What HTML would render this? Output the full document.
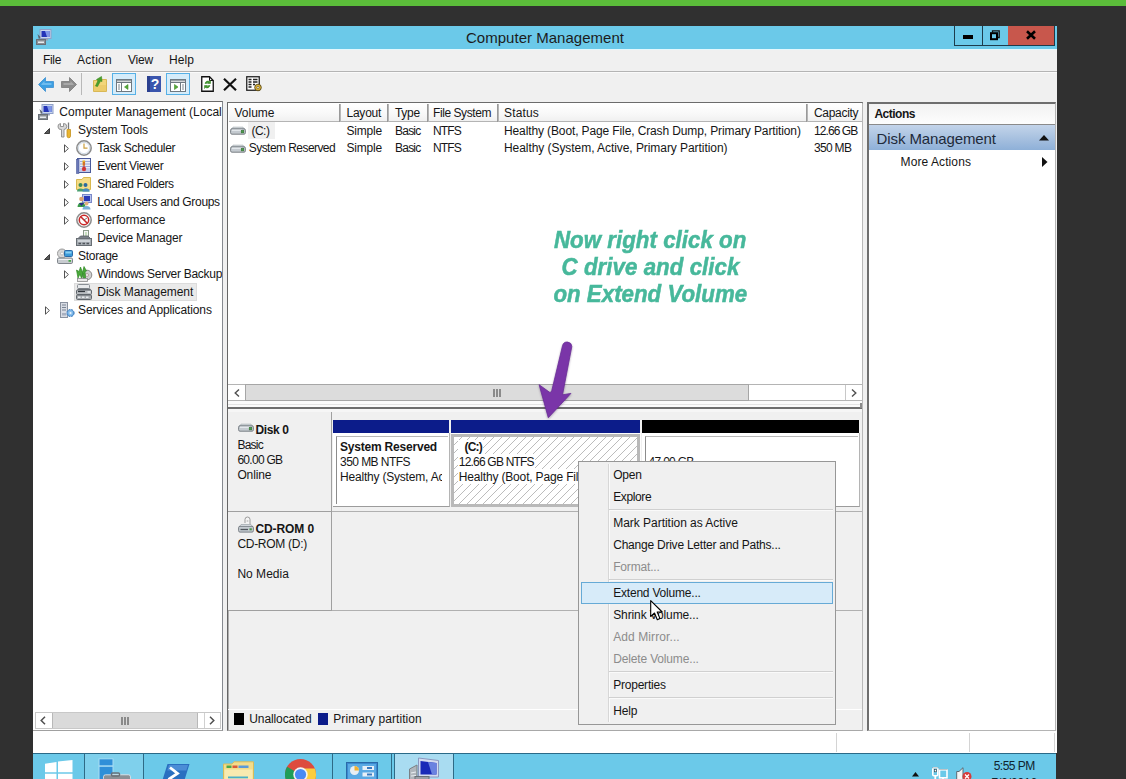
<!DOCTYPE html>
<html>
<head>
<meta charset="utf-8">
<title>Computer Management</title>
<style>
html,body{margin:0;padding:0;}
body{width:1126px;height:779px;overflow:hidden;background:#303030;position:relative;font-family:"Liberation Sans",sans-serif;font-size:12px;color:#000;}
.a{position:absolute;}
.t{position:absolute;white-space:nowrap;line-height:14px;height:14px;color:#161616;}
svg{position:absolute;overflow:visible;}
#green{left:0;top:0;width:1126px;height:6px;background:#5bbd3a;overflow:hidden;}
#win{left:33px;top:26px;width:1024px;height:727px;background:#f0f0f0;}
#title{left:33px;top:26px;width:1024px;height:23px;background:#6bc9e9;border-bottom:1px solid #e4f8fd;}
#menuline{left:33px;top:71px;width:1024px;height:1px;background:#b4b4b4;}
.sel{position:absolute;border:1px solid #56b0e6;background:#d5ecfa;box-sizing:border-box;}
.tri{position:absolute;width:0;height:0;}
</style>
</head>
<body>
<div id="green" class="a"></div>
<div id="win" class="a"></div>
<div id="title" class="a"></div>
<svg style="left:36px;top:29px" width="16" height="16" viewBox="0 0 16 16">
 <rect x="4" y="0.5" width="11" height="9" fill="#c9d6ee" stroke="#8fa0c8" stroke-width="1"/>
 <rect x="5.5" y="2" width="8" height="6" fill="#2434b8"/>
 <path d="M9 2h4.5v6H11z" fill="#7f97e8"/>
 <rect x="7" y="10" width="5" height="1.5" fill="#9aa3b5"/>
 <rect x="0.5" y="10.5" width="9" height="5" fill="#8a9096" stroke="#6a7078"/>
 <rect x="2" y="12.5" width="6" height="1.5" fill="#e8ecf0"/>
 <path d="M1.5 5l3 3-1.5 2.5z" fill="#5a6470"/>
</svg>
<div class="t" style="left:466px;top:27.5px;font-size:15px;line-height:19px;height:19px;color:#1c1c1c;letter-spacing:0.021px;">Computer Management</div>
<div class="a" style="left:954px;top:26px;width:101px;height:20px;box-sizing:border-box;border:1px solid #1d3c4c;border-top:none;"></div>
<div class="a" style="left:982px;top:26px;width:1px;height:19px;background:#1d3c4c;"></div>
<div class="a" style="left:1008px;top:26px;width:46px;height:19px;background:#c8574c;"></div>
<div class="a" style="left:963px;top:35px;width:10px;height:4px;background:#000;"></div>
<svg style="left:990px;top:30px" width="10" height="10" viewBox="0 0 10 10"><path d="M2.5 2.5V0.8H9.2V7.5H7.5" fill="none" stroke="#111" stroke-width="1.3"/><rect x="1" y="3.2" width="6" height="6" fill="none" stroke="#000" stroke-width="2"/></svg>
<svg style="left:1026px;top:31px" width="10" height="8" viewBox="0 0 10 8"><path d="M1 0.3L9 7.7M9 0.3L1 7.7" stroke="#000" stroke-width="2.6" fill="none"/></svg>
<div id="menuline" class="a"></div><div class="a" style="left:33px;top:72px;width:1024px;height:1px;background:#fafafa;"></div>
<div class="t" style="left:43px;top:53px;letter-spacing:-0.336px;">File</div><div class="t" style="left:77px;top:53px;letter-spacing:0.273px;">Action</div><div class="t" style="left:128px;top:53px;letter-spacing:-0.199px;">View</div><div class="t" style="left:169px;top:53px;letter-spacing:0.078px;">Help</div>
<svg style="left:38px;top:77px" width="16" height="15" viewBox="0 0 16 15"><path d="M0.5 7.5L7.5 0.5V4.5H15.5V10.5H7.5V14.5Z" fill="#3d9fe2" stroke="#3b8fd0" stroke-width="0.8"/><path d="M3 7.5L6.5 4V6H13.5V8H4Z" fill="#7cc3f2" opacity="0.8"/></svg>
<svg style="left:61px;top:77px" width="16" height="15" viewBox="0 0 16 15"><path d="M15.5 7.5L8.5 0.5V4.5H0.5V10.5H8.5V14.5Z" fill="#8c8c8c" stroke="#7a7a7a" stroke-width="0.8"/><path d="M13 7.5L9.5 4V6H2.500V8H12Z" fill="#b0b0b0" opacity="0.8"/></svg>
<div class="a" style="left:81px;top:73px;width:1px;height:22px;background:#b8b8b8;"></div>
<svg style="left:93px;top:76px" width="15" height="16" viewBox="0 0 15 16"><path d="M0.5 4.5H5L6 3.500H13.500V15.500H0.500Z" fill="#f3d67a" stroke="#d9b856"/><rect x="1" y="9" width="12" height="6" fill="#e9c765" opacity="0.7"/><path d="M2.500 10L5 4.500L3.500 3.500L8.500 0.500L9 5.500L7.500 5L4.500 10.500Z" fill="#4aa02c" stroke="#3a8a20" stroke-width="0.6"/></svg>
<div class="sel" style="left:112px;top:73px;width:24px;height:22px;"></div>
<svg style="left:116px;top:79px" width="16" height="13" viewBox="0 0 16 13"><rect x="0.5" y="0.5" width="15" height="12" fill="#fff" stroke="#6e7880"/><path d="M0.500 3.500H15.500M5.500 3.500V12.500M0.500 1.800H15" stroke="#6e7880" fill="none"/><path d="M2 6H4M2 8H4M2 10H4" stroke="#6e7880" stroke-width="0.9"/><path d="M12 5.500V10.500L8.500 8Z" fill="#57a83a" stroke="#3f8f28" stroke-width="0.6"/></svg>
<svg style="left:147px;top:76px" width="14" height="16" viewBox="0 0 14 16"><rect x="0" y="0" width="14" height="16" fill="#3a55ad"/><rect x="0" y="0" width="3" height="16" fill="#2a3f8f"/><text x="8" y="13" font-family="Liberation Sans, sans-serif" font-size="14" font-weight="bold" fill="#fff" text-anchor="middle">?</text></svg>
<div class="sel" style="left:166px;top:73px;width:24px;height:22px;"></div>
<svg style="left:170px;top:79px" width="16" height="13" viewBox="0 0 16 13"><rect x="0.500" y="0.500" width="15" height="12" fill="#fff" stroke="#6e7880"/><path d="M0.500 3.500H15.500M10.500 3.500V12.500M0.500 1.800H15" stroke="#6e7880" fill="none"/><path d="M12 6H14M12 8H14M12 10H14" stroke="#6e7880" stroke-width="0.9"/><path d="M4.500 5.500V10.500L8 8Z" fill="#57a83a" stroke="#3f8f28" stroke-width="0.6"/></svg>
<svg style="left:201px;top:76px" width="13" height="16" viewBox="0 0 13 16"><path d="M0.750 0.750H8.500L12.250 4.500V15.250H0.750Z" fill="#fff" stroke="#111" stroke-width="1.3"/><path d="M8.500 0.750V4.500H12.250" fill="none" stroke="#111" stroke-width="1"/><path d="M4 7.500A3 3 0 0 1 8.500 5.500L9.500 4.500V7.500H6.500L7.500 6.500A1.800 1.800 0 0 0 5.500 7.500ZM9 9.500A3 3 0 0 1 4.500 11.500L3.500 12.500V9.500H6.500L5.500 10.500A1.800 1.800 0 0 0 7.500 9.500Z" fill="#3f9a2a" stroke="#2c7a1c" stroke-width="0.5"/></svg>
<svg style="left:223px;top:78px" width="14" height="13" viewBox="0 0 14 13"><path d="M1 0.700L13 12.300M13 0.700L1 12.300" stroke="#111" stroke-width="2.200" fill="none"/></svg>
<svg style="left:246px;top:76px" width="17" height="16" viewBox="0 0 17 16"><rect x="0.750" y="0.750" width="12.500" height="13.500" fill="#fff" stroke="#222" stroke-width="1.3"/><path d="M2.500 3.500H5.500M7 3.500H11.500M2.500 6H5.500M7 6H11.500M2.500 8.500H5.500M7 8.500H9M2.500 11H5.500" stroke="#222" stroke-width="1.400"/><circle cx="12" cy="11.500" r="3.300" fill="#d9b23a" stroke="#5a4a1a" stroke-width="0.9"/><circle cx="12" cy="11.500" r="1.100" fill="#fff" stroke="#5a4a1a" stroke-width="0.6"/></svg>
<div class="a" style="left:33px;top:101px;width:190px;height:630px;background:#fff;border-top:1px solid #6a6a6a;border-right:1px solid #868a90;border-bottom:1px solid #a0a0a0;box-sizing:border-box;"></div>
<div class="a" style="left:74px;top:283px;width:123px;height:18px;background:#eaeaea;border:1px solid #dcdcdc;box-sizing:border-box;"></div>
<svg style="left:38px;top:104px" width="16" height="16" viewBox="0 0 16 16"><rect x="4" y="0.5" width="11" height="9" fill="#c9d6ee" stroke="#8fa0c8"/><rect x="5.5" y="2" width="8" height="6" fill="#2434b8"/><path d="M9 2h4.500v6H11z" fill="#7f97e8"/><rect x="7" y="10" width="5" height="1.500" fill="#9aa3b5"/><rect x="0.500" y="10.500" width="9" height="5" fill="#8a9096" stroke="#6a7078"/><rect x="2" y="12.500" width="6" height="1.500" fill="#e8ecf0"/><path d="M1.500 5l3 3-1.500 2.500z" fill="#5a6470"/></svg>
<div class="t" style="left:59.3px;top:105px;letter-spacing:0.016px;">Computer Management (Local</div>
<svg style="left:44px;top:128px" width="6" height="6" viewBox="0 0 6 6"><path d="M5.500 0.500V5.500H0.500Z" fill="#5a5a5a" stroke="#303030" stroke-width="0.900"/></svg>
<svg style="left:59px;top:122px" width="16" height="16" viewBox="0 0 16 16"><path d="M2.500 15V7.500A3 3 0 0 1 1.500 1.500V4.500H4.500V1.500A3 3 0 0 1 5 7.500V15Z" fill="#d8d8d8" stroke="#8a8a8a" stroke-width="0.9"/><path d="M9.500 0.500V7" stroke="#7a7a7a" stroke-width="1.300"/><path d="M8 7.500H11.500V14A1.750 1.750 0 0 1 8 14Z" fill="#eab530" stroke="#c4901c" stroke-width="0.8"/></svg>
<div class="t" style="left:78px;top:123px;letter-spacing:-0.095px;">System Tools</div>
<svg style="left:64px;top:143.5px" width="5" height="9" viewBox="0 0 5 9"><path d="M0.500 0.800L4.400 4.500L0.500 8.200Z" fill="#fff" stroke="#404040" stroke-width="0.900"/></svg>
<svg style="left:76px;top:140px" width="16" height="16" viewBox="0 0 16 16"><circle cx="8" cy="8" r="7.200" fill="#eef2f6" stroke="#8c8c8c" stroke-width="1.500"/><circle cx="8" cy="8" r="5.600" fill="#fff" stroke="#c8d4e0" stroke-width="0.800"/><path d="M8 3.500V8.200H11.500" fill="none" stroke="#caa040" stroke-width="1.200"/></svg>
<div class="t" style="left:97.3px;top:141px;letter-spacing:-0.289px;">Task Scheduler</div>
<svg style="left:64px;top:161.5px" width="5" height="9" viewBox="0 0 5 9"><path d="M0.500 0.800L4.400 4.500L0.500 8.200Z" fill="#fff" stroke="#404040" stroke-width="0.900"/></svg>
<svg style="left:76px;top:158px" width="16" height="16" viewBox="0 0 16 16"><rect x="1.500" y="0.500" width="13" height="14" fill="#e8ecf8" stroke="#4a5a9a"/><rect x="0.500" y="1.500" width="2.500" height="14" fill="#6a78b8" stroke="#4a5a9a" stroke-width="0.600"/><path d="M4 3.500H14M4 6H14M4 8.500H14M4 11H14M4 13H14" stroke="#8a98d0" stroke-width="0.800"/><rect x="6.500" y="2.500" width="2.600" height="5" fill="#e8b020"/><circle cx="8" cy="11" r="2.200" fill="#d83a3a"/><path d="M8 4V12" stroke="#c03030" stroke-width="1"/></svg>
<div class="t" style="left:97.3px;top:159px;letter-spacing:-0.374px;">Event Viewer</div>
<svg style="left:64px;top:179.5px" width="5" height="9" viewBox="0 0 5 9"><path d="M0.500 0.800L4.400 4.500L0.500 8.200Z" fill="#fff" stroke="#404040" stroke-width="0.900"/></svg>
<svg style="left:76px;top:176px" width="16" height="16" viewBox="0 0 16 16"><path d="M0.500 3.500H6L7.500 1.500H14.500V13.500H0.500Z" fill="#f5dc86" stroke="#d8b84e"/><circle cx="4.500" cy="9" r="2" fill="#3a8a5a"/><circle cx="9.500" cy="9" r="2" fill="#2a6aa0"/><path d="M1 15.500A3.500 3 0 0 1 8 15.500ZM6.500 15.500A3.500 3 0 0 1 13.500 15.500Z" fill="#4aa070"/><path d="M6.500 15.500A3.500 3 0 0 1 13.500 15.500Z" fill="#4a8ac0"/></svg>
<div class="t" style="left:97.3px;top:177px;letter-spacing:-0.403px;">Shared Folders</div>
<svg style="left:64px;top:197.5px" width="5" height="9" viewBox="0 0 5 9"><path d="M0.500 0.800L4.400 4.500L0.500 8.200Z" fill="#fff" stroke="#404040" stroke-width="0.900"/></svg>
<svg style="left:76px;top:194px" width="16" height="16" viewBox="0 0 16 16"><rect x="6.500" y="0.500" width="9" height="8" fill="#b8c4ee" stroke="#7a88c8"/><rect x="8" y="2" width="6" height="5" fill="#2a3ab8"/><circle cx="5.500" cy="5" r="2.300" fill="#d8a070"/><path d="M1.500 13A4 4.500 0 0 1 9.500 13Z" fill="#3a9a4a"/><circle cx="10.500" cy="9.500" r="2" fill="#e0b080"/><path d="M6.500 15.500A4 3.500 0 0 1 14.500 15.500Z" fill="#7ab0d8"/><path d="M3 9L5.500 12L8 9" fill="#2a2a8a"/></svg>
<div class="t" style="left:97.3px;top:195px;letter-spacing:-0.314px;">Local Users and Groups</div>
<svg style="left:64px;top:215.5px" width="5" height="9" viewBox="0 0 5 9"><path d="M0.500 0.800L4.400 4.500L0.500 8.200Z" fill="#fff" stroke="#404040" stroke-width="0.900"/></svg>
<svg style="left:76px;top:212px" width="16" height="16" viewBox="0 0 16 16"><circle cx="8" cy="8" r="7.200" fill="#f4f4f4" stroke="#8c8c8c" stroke-width="1.500"/><circle cx="8" cy="8" r="4.700" fill="#fff" stroke="#c82828" stroke-width="1.500"/><path d="M4.500 4.500L11.500 11.500" stroke="#c82828" stroke-width="1.600"/><path d="M8 8L11 6" stroke="#555" stroke-width="0.800"/></svg>
<div class="t" style="left:97.3px;top:213px;letter-spacing:-0.064px;">Performance</div>
<svg style="left:76px;top:230px" width="16" height="16" viewBox="0 0 16 16"><rect x="7.500" y="0.500" width="5" height="7" fill="#f4f4f4" stroke="#8a9a8a"/><rect x="9" y="2" width="2" height="4" fill="#c8e0c0"/><path d="M2 8.500L4.500 6H12L14.500 8.500Z" fill="#7a8088" stroke="#5a6068" stroke-width="0.800"/><rect x="0.500" y="8.500" width="15" height="7" fill="#a8aeb4" stroke="#686e74"/><path d="M2 11H14" stroke="#e8ecf0" stroke-width="1.200"/><path d="M2.500 13.500H5M6.500 13.500H9M10.500 13.500H13" stroke="#50565c" stroke-width="1.400"/></svg>
<div class="t" style="left:97.3px;top:231px;letter-spacing:-0.170px;">Device Manager</div>
<svg style="left:44px;top:254px" width="6" height="6" viewBox="0 0 6 6"><path d="M5.500 0.500V5.500H0.500Z" fill="#5a5a5a" stroke="#303030" stroke-width="0.900"/></svg>
<svg style="left:57px;top:248px" width="16" height="16" viewBox="0 0 16 16"><circle cx="5" cy="5.500" r="4.500" fill="#d8d8d8" stroke="#9a9a9a"/><circle cx="5" cy="5.500" r="1.500" fill="#f8f8f8" stroke="#a8a8a8" stroke-width="0.600"/><rect x="7.500" y="2.500" width="8" height="6" rx="1" fill="#3a9ad8" stroke="#2a6aa8"/><rect x="8.500" y="3.500" width="6" height="2" fill="#8ad0f4"/><rect x="0.500" y="10" width="15" height="5.500" rx="1.200" fill="#c8ccd0" stroke="#80868c"/><rect x="11.500" y="12" width="2.500" height="1.800" fill="#4aa84a"/><path d="M1.500 11.500H14.500" stroke="#f0f2f4" stroke-width="1"/></svg>
<div class="t" style="left:78px;top:249px;letter-spacing:-0.290px;">Storage</div>
<svg style="left:64px;top:269.5px" width="5" height="9" viewBox="0 0 5 9"><path d="M0.500 0.800L4.400 4.500L0.500 8.200Z" fill="#fff" stroke="#404040" stroke-width="0.900"/></svg>
<svg style="left:76px;top:266px" width="16" height="16" viewBox="0 0 16 16"><circle cx="11" cy="9" r="4.800" fill="#d0d0d0" stroke="#8a8a8a"/><circle cx="11" cy="9" r="1.500" fill="#f4f4f4" stroke="#9a7a7a" stroke-width="0.600"/><path d="M2 12L0.500 4L3 5.500L4.500 1L6.500 6.500L8 0.500L10.500 5L9 5.500L9.500 12L7.500 12.500L7 7L5.500 12.500L4 8Z" fill="#4aa83a" stroke="#2e8a22" stroke-width="0.700"/><rect x="1.500" y="12.500" width="10" height="3" fill="#e8e8e8" stroke="#8a8a8a" stroke-width="0.800"/></svg>
<div class="t" style="left:97.3px;top:267px;letter-spacing:-0.282px;">Windows Server Backup</div>
<svg style="left:76px;top:284px" width="16" height="16" viewBox="0 0 16 16"><rect x="1.500" y="0.500" width="12" height="4" rx="1" fill="#e8eaec" stroke="#8a9096"/><path d="M0.500 6.500L2.500 4.500H14L15.500 6.500Z" fill="#6a7076"/><rect x="0.500" y="6" width="15" height="4.500" rx="1" fill="#b8bcc0" stroke="#60666c"/><path d="M2 7.500H9" stroke="#30363c" stroke-width="1.200"/><rect x="11.500" y="7" width="3" height="2" fill="#e0e4e8"/><rect x="0.500" y="11" width="15" height="4.500" rx="1" fill="#a8acb0" stroke="#60666c"/><path d="M2 13.200H4.500M6 13.200H8.500M10 13.200H12.500" stroke="#e8ecf0" stroke-width="1.400"/></svg>
<div class="t" style="left:97.3px;top:285px;letter-spacing:-0.048px;">Disk Management</div>
<svg style="left:45px;top:305.5px" width="5" height="9" viewBox="0 0 5 9"><path d="M0.500 0.800L4.400 4.500L0.500 8.200Z" fill="#fff" stroke="#404040" stroke-width="0.900"/></svg>
<svg style="left:59px;top:302px" width="16" height="16" viewBox="0 0 16 16"><rect x="1.500" y="0.500" width="7" height="15" fill="#d8dce4" stroke="#8a92a0"/><path d="M3 3H7M3 5.500H7M3 8H7" stroke="#7a8494" stroke-width="1"/><rect x="3" y="11" width="4" height="2.500" fill="#a8b0c0"/><circle cx="11.500" cy="11" r="3.600" fill="#6aa8e0" stroke="#3a78b8" stroke-width="1" stroke-dasharray="1.800 1.100"/><circle cx="11.500" cy="11" r="2.400" fill="#8ac0ec"/><circle cx="11.500" cy="11" r="1" fill="#f0f6fc"/></svg>
<div class="t" style="left:78px;top:303px;letter-spacing:-0.118px;">Services and Applications</div>
<div class="a" style="left:222px;top:102px;width:1px;height:628px;background:#868a90;"></div><div class="a" style="left:223px;top:102px;width:4px;height:629px;background:#f0f0f0;"></div>
<div class="a" style="left:35px;top:712px;width:186px;height:17px;background:#fff;border:1px solid #c8c8c8;box-sizing:border-box;"></div>
<div class="a" style="left:52px;top:713px;width:146px;height:15px;background:#dadada;border-left:1px solid #b8b8b8;border-right:1px solid #b8b8b8;box-sizing:border-box;"></div>
<div class="a" style="left:204px;top:713px;width:1px;height:15px;background:#d0d0d0;"></div>
<svg style="left:40px;top:716px" width="6" height="9" viewBox="0 0 6 9"><path d="M5 0.700L1.200 4.500L5 8.300" fill="none" stroke="#505050" stroke-width="1.500"/></svg>
<svg style="left:209px;top:716px" width="6" height="9" viewBox="0 0 6 9"><path d="M1 0.700L4.800 4.500L1 8.300" fill="none" stroke="#505050" stroke-width="1.500"/></svg>
<svg style="left:121px;top:717px" width="8" height="8" viewBox="0 0 8 8"><path d="M1 0V8M4 0V8M7 0V8" stroke="#606060" stroke-width="1.300"/></svg>
<div class="a" style="left:227px;top:102px;width:636px;height:629px;background:#f0f0f0;border:1px solid #666;border-top:2px solid #6c6c6c;border-right-color:#b8b8b8;border-bottom-color:#a8a8a8;box-sizing:border-box;"></div>
<div class="a" style="left:228px;top:104px;width:1px;height:626px;background:#b0b0b0;"></div>
<div class="a" style="left:228px;top:103px;width:634px;height:281px;background:#fff;"></div>
<div class="a" style="left:229px;top:104px;width:633px;height:18px;background:linear-gradient(#ffffff,#f8f8f8 60%,#f0f0f0);border-bottom:1px solid #b4b4b4;box-sizing:border-box;"></div>
<div class="a" style="left:339px;top:104px;width:2px;height:18px;background:linear-gradient(90deg,#8c8c8c,#c4c4c4);"></div><div class="a" style="left:387px;top:104px;width:2px;height:18px;background:linear-gradient(90deg,#8c8c8c,#c4c4c4);"></div><div class="a" style="left:427px;top:104px;width:2px;height:18px;background:linear-gradient(90deg,#8c8c8c,#c4c4c4);"></div><div class="a" style="left:497px;top:104px;width:2px;height:18px;background:linear-gradient(90deg,#8c8c8c,#c4c4c4);"></div><div class="a" style="left:806px;top:104px;width:2px;height:18px;background:linear-gradient(90deg,#8c8c8c,#c4c4c4);"></div>
<div class="t" style="left:234.5px;top:106px;letter-spacing:-0.005px;">Volume</div><div class="t" style="left:346.5px;top:106px;letter-spacing:-0.239px;">Layout</div><div class="t" style="left:395px;top:106px;letter-spacing:-0.304px;">Type</div><div class="t" style="left:433px;top:106px;letter-spacing:-0.426px;">File System</div><div class="t" style="left:504px;top:106px;letter-spacing:0.161px;">Status</div><div class="t" style="left:814px;top:106px;letter-spacing:-0.298px;">Capacity</div>
<div class="a" style="left:248px;top:122px;width:27px;height:17px;background:#f0f0f0;"></div>
<svg style="left:230px;top:126px" width="16" height="9" viewBox="0 0 16 9"><path d="M1.500 3L3 1.200H13L14.500 3Z" fill="#e8ecf0" stroke="#9aa0a6" stroke-width="0.700"/><rect x="0.600" y="2.800" width="14.800" height="5.400" rx="1.400" fill="#c4cad0" stroke="#7a8086" stroke-width="1"/><path d="M2 4.200H12" stroke="#f0f3f6" stroke-width="1"/><rect x="11.200" y="4.300" width="2.600" height="2.600" fill="#4a9a4a" stroke="#2e6e2e" stroke-width="0.500"/></svg>
<svg style="left:230px;top:144px" width="16" height="9" viewBox="0 0 16 9"><path d="M1.500 3L3 1.200H13L14.500 3Z" fill="#e8ecf0" stroke="#9aa0a6" stroke-width="0.700"/><rect x="0.600" y="2.800" width="14.800" height="5.400" rx="1.400" fill="#c4cad0" stroke="#7a8086" stroke-width="1"/><path d="M2 4.200H12" stroke="#f0f3f6" stroke-width="1"/><rect x="11.200" y="4.300" width="2.600" height="2.600" fill="#4a9a4a" stroke="#2e6e2e" stroke-width="0.500"/></svg>
<div class="t" style="left:251.4px;top:123.5px;letter-spacing:-0.500px;">(C:)</div><div class="t" style="left:346.5px;top:123.5px;letter-spacing:-0.215px;">Simple</div><div class="t" style="left:395px;top:123.5px;letter-spacing:-0.769px;">Basic</div><div class="t" style="left:433px;top:123.5px;letter-spacing:-0.836px;">NTFS</div><div class="t" style="left:504px;top:123.5px;letter-spacing:-0.119px;">Healthy (Boot, Page File, Crash Dump, Primary Partition)</div><div class="t" style="left:814px;top:123.5px;letter-spacing:-0.925px;">12.66 GB</div>
<div class="t" style="left:248.8px;top:141.3px;letter-spacing:-0.560px;">System Reserved</div><div class="t" style="left:346.5px;top:141.3px;letter-spacing:-0.215px;">Simple</div><div class="t" style="left:395px;top:141.3px;letter-spacing:-0.769px;">Basic</div><div class="t" style="left:433px;top:141.3px;letter-spacing:-0.836px;">NTFS</div><div class="t" style="left:504px;top:141.3px;letter-spacing:-0.060px;">Healthy (System, Active, Primary Partition)</div><div class="t" style="left:814px;top:141.3px;letter-spacing:-0.693px;">350 MB</div>
<div class="a" style="left:228px;top:384px;width:634px;height:17px;background:#fff;border-top:1px solid #b4b4b4;border-bottom:1px solid #b4b4b4;box-sizing:border-box;"></div>
<div class="a" style="left:245px;top:384px;width:504px;height:17px;background:#dcdcdc;border:1px solid #a6a6a6;box-sizing:border-box;"></div>
<div class="a" style="left:845px;top:385px;width:1px;height:15px;background:#c8c8c8;"></div>
<svg style="left:234px;top:389px" width="6" height="8" viewBox="0 0 6 8"><path d="M5 0.500L1.200 4L5 7.500" fill="none" stroke="#505050" stroke-width="1.400"/></svg>
<svg style="left:851px;top:389px" width="6" height="8" viewBox="0 0 6 8"><path d="M1 0.500L4.800 4L1 7.500" fill="none" stroke="#505050" stroke-width="1.400"/></svg>
<svg style="left:493px;top:389px" width="8" height="8" viewBox="0 0 8 8"><path d="M1 0V8M4 0V8M7 0V8" stroke="#606060" stroke-width="1.300"/></svg>
<div class="a" style="left:228px;top:401px;width:634px;height:6px;background:#fbfbfb;"></div>
<div class="a" style="left:228px;top:404px;width:634px;height:1px;background:#e4e4e4;"></div>
<div class="a" style="left:228px;top:407px;width:634px;height:2px;background:#6e6e6e;"></div>
<div class="a" style="left:860px;top:403px;width:2px;height:5px;background:#8a8a8a;"></div>
<div class="a" style="left:228px;top:409px;width:634px;height:3px;background:#f6f6f6;"></div>
<div class="a" style="left:228px;top:412px;width:104px;height:100px;background:#f0f0f0;border-right:1px solid #a0a0a0;border-bottom:1px solid #a0a0a0;box-sizing:border-box;"></div>
<div class="a" style="left:332px;top:511px;width:530px;height:1px;background:#b0b0b0;"></div>
<svg style="left:238px;top:423px" width="16" height="9" viewBox="0 0 16 9"><path d="M1.500 3L3 1.200H13L14.500 3Z" fill="#e8ecf0" stroke="#9aa0a6" stroke-width="0.700"/><rect x="0.600" y="2.800" width="14.800" height="5.400" rx="1.400" fill="#c4cad0" stroke="#7a8086" stroke-width="1"/><path d="M2 4.200H12" stroke="#f0f3f6" stroke-width="1"/><rect x="11.200" y="4.300" width="2.600" height="2.600" fill="#4a9a4a" stroke="#2e6e2e" stroke-width="0.500"/></svg>
<div class="t" style="left:255.5px;top:422.8px;font-weight:bold;letter-spacing:-0.393px;">Disk 0</div><div class="t" style="left:237.4px;top:438px;letter-spacing:-0.769px;">Basic</div><div class="t" style="left:237.4px;top:452.8px;letter-spacing:-0.713px;">60.00 GB</div><div class="t" style="left:237.4px;top:467.6px;letter-spacing:-0.115px;">Online</div>
<div class="a" style="left:333px;top:420px;width:116px;height:13px;background:#0c1c8a;"></div>
<div class="a" style="left:333px;top:433px;width:117px;height:74px;background:#fff;border-right:1px solid #b4b4b4;border-bottom:1px solid #9c9c9c;box-sizing:border-box;"></div>
<div class="a" style="left:336px;top:436px;width:112px;height:68px;border-left:1px solid #8c8c8c;border-top:1px solid #b8b8b8;box-sizing:border-box;overflow:hidden;"></div>
<div class="t" style="left:340px;top:440px;font-weight:bold;letter-spacing:-0.204px;">System Reserved</div><div class="t" style="left:340px;top:454.8px;letter-spacing:-0.548px;">350 MB NTFS</div><div class="t" style="left:340px;top:470px;width:102px;overflow:hidden;letter-spacing:-0.2px;">Healthy (System, Ac</div>
<div class="a" style="left:451px;top:420px;width:189px;height:13px;background:#0c1c8a;"></div>
<div class="a" style="left:451px;top:433px;width:190px;height:74px;background:#fdfdfd;"></div>
<div class="a" style="left:451px;top:434px;width:189px;height:73px;box-sizing:border-box;border:3px solid #b9b9b9;background:#fff;"></div>
<svg style="left:454px;top:437px" width="183" height="67" viewBox="0 0 183 67"><defs><pattern id="hatch" width="8" height="8" patternUnits="userSpaceOnUse"><path d="M-1 9L9 -1M-1 1L1 -1M7 9L9 7" stroke="#b4b4b4" stroke-width="0.900" fill="none"/></pattern></defs><rect width="183" height="67" fill="url(#hatch)"/></svg>
<div class="a" style="left:458px;top:440px;width:25px;height:14px;background:#fff;"></div>
<div class="a" style="left:458px;top:454px;width:77px;height:15px;background:#fff;"></div>
<div class="a" style="left:458px;top:469px;width:121px;height:15px;background:#fff;"></div>
<div class="t" style="left:464.5px;top:439.5px;font-weight:bold;letter-spacing:-0.789px;">(C:)</div><div class="t" style="left:458.8px;top:454.8px;letter-spacing:-0.798px;">12.66 GB NTFS</div><div class="t" style="left:458.8px;top:469.8px;letter-spacing:-0.170px;">Healthy (Boot, Page Fil</div>
<div class="a" style="left:642px;top:420px;width:217px;height:13px;background:#000;"></div>
<div class="a" style="left:642px;top:433px;width:218px;height:74px;background:#fff;border-right:1px solid #b4b4b4;border-bottom:1px solid #9c9c9c;box-sizing:border-box;"></div>
<div class="a" style="left:645px;top:436px;width:213px;height:68px;border-left:1px solid #8c8c8c;border-top:1px solid #b8b8b8;box-sizing:border-box;"></div>
<div class="t" style="left:648.6px;top:454.8px;letter-spacing:-0.713px;">47.00 GB</div>
<div class="a" style="left:228px;top:512px;width:104px;height:99px;background:#f0f0f0;border-right:1px solid #a0a0a0;border-bottom:1px solid #a0a0a0;box-sizing:border-box;"></div>
<div class="a" style="left:332px;top:610px;width:530px;height:1px;background:#b0b0b0;"></div>
<svg style="left:238px;top:518px" width="16" height="15" viewBox="0 0 16 15"><path d="M7 5V1.500A2.500 2.500 0 0 1 12 1.500V6" fill="#f4f4f4" stroke="#9a9a9a" stroke-width="1"/><circle cx="9.500" cy="3" r="1" fill="#c8c8c8"/><path d="M1.500 8.500L3 6.500H13L14.500 8.500Z" fill="#e8ecf0" stroke="#9aa0a6" stroke-width="0.700"/><rect x="0.600" y="8.300" width="14.800" height="5.800" rx="1.400" fill="#c4cad0" stroke="#7a8086"/><path d="M2.500 11.500H10" stroke="#50565c" stroke-width="1.300"/><rect x="11.500" y="10.300" width="2.300" height="2" fill="#4a9a4a"/></svg>
<div class="t" style="left:255.5px;top:521.8px;font-weight:bold;letter-spacing:-0.105px;">CD-ROM 0</div><div class="t" style="left:237.4px;top:536.7px;letter-spacing:-0.287px;">CD-ROM (D:)</div><div class="t" style="left:237.4px;top:566.6px;letter-spacing:0.018px;">No Media</div>
<div class="a" style="left:228px;top:709px;width:634px;height:1px;background:#fff;"></div>
<div class="a" style="left:234px;top:713px;width:10px;height:12px;background:#000;"></div>
<div class="a" style="left:318px;top:713px;width:10px;height:12px;background:#0c1c8a;"></div>
<div class="t" style="left:249.3px;top:712px;letter-spacing:-0.107px;">Unallocated</div><div class="t" style="left:333.3px;top:712px;letter-spacing:0.067px;">Primary partition</div>
<div class="a" style="left:867px;top:102px;width:189px;height:629px;background:#fff;border-left:2px solid #6e6e6e;border-top:2px solid #6e6e6e;border-right:1px solid #b4b4b4;border-bottom:1px solid #b4b4b4;box-sizing:border-box;"></div>
<div class="a" style="left:869px;top:104px;width:186px;height:20px;background:linear-gradient(#f2f2f2,#fdfdfd);border-bottom:1px solid #8a8a8a;"></div>
<div class="a" style="left:869px;top:125px;width:186px;height:25px;background:linear-gradient(#c3d4ea,#a9c2e0 50%,#8eb0d8);"></div>
<div class="t" style="left:874.4px;top:106.8px;font-weight:bold;letter-spacing:-0.488px;">Actions</div><div class="t" style="left:876.6px;top:128.7px;font-size:15px;line-height:19px;height:19px;color:#1e2a3a;letter-spacing:-0.106px;">Disk Management</div><div class="t" style="left:900.6px;top:155px;letter-spacing:0.085px;">More Actions</div>
<svg style="left:1038.5px;top:135px" width="10" height="5.5" viewBox="0 0 10 5.5"><path d="M0 5.500L5 0L10 5.500Z" fill="#111"/></svg>
<svg style="left:1042px;top:157px" width="5.5" height="10" viewBox="0 0 5.5 10"><path d="M0 0L5.500 5L0 10Z" fill="#111"/></svg>
<div class="a" style="left:33px;top:731px;width:1024px;height:22px;background:#fff;"></div>
<div class="a" style="left:836px;top:733px;width:1px;height:19px;background:#d4d4d4;"></div>
<div class="a" style="left:969px;top:733px;width:1px;height:19px;background:#d4d4d4;"></div>
<div class="a" style="left:1054px;top:733px;width:1px;height:19px;background:#d4d4d4;"></div>
<div class="a" style="left:33px;top:753px;width:1023px;height:26px;background:#6bc9e9;border-top:1px solid #2a6a88;box-sizing:border-box;"></div>
<div class="a" style="left:84px;top:754px;width:60px;height:25px;background:#7fd0ec;border-left:1px solid #2e6a86;border-right:1px solid #2e6a86;box-sizing:border-box;"></div>
<div class="a" style="left:332px;top:754px;width:60px;height:25px;border-left:1px solid #2e6a86;border-right:1px solid #2e6a86;box-sizing:border-box;"></div>
<div class="a" style="left:394px;top:754px;width:60px;height:25px;background:#a9dcf1;border-left:1px solid #2e6a86;border-right:1px solid #2e6a86;box-sizing:border-box;"></div>
<svg style="left:44.5px;top:760px" width="27.5" height="20" viewBox="0 0 27.5 20"><path d="M0 3.800L11.500 1.900V12.300H0ZM13 1.600L27.500 0V12.300H13ZM0 13.800H11.500V20H0ZM13 13.800H27.500V20H13Z" fill="#fff"/></svg>
<svg style="left:98px;top:758px" width="34" height="22" viewBox="0 0 34 22"><rect x="0.500" y="0.500" width="15" height="21" fill="#a8dcf4"/><rect x="1.500" y="1.300" width="13" height="6" fill="#2f8fd8"/><rect x="1.500" y="8.800" width="13" height="13" fill="#2f8fd8"/><rect x="5.500" y="16.800" width="27" height="6" rx="2" fill="#8a9096" stroke="#e8ecf0" stroke-width="0.800"/><rect x="13.500" y="15" width="8" height="3" rx="1" fill="none" stroke="#6a7078" stroke-width="1.400"/></svg>
<svg style="left:162px;top:763.5px" width="28" height="16" viewBox="0 0 28 16"><path d="M5.500 0H27.500L22.500 16H0.500Z" fill="#2a6fc0"/><path d="M7 1H26L24.300 6.500H5.300Z" fill="#5a9ae0" opacity="0.700"/><path d="M8 3.500L15.500 9.500L6.500 15.500" fill="none" stroke="#fff" stroke-width="2.800"/></svg>
<svg style="left:223px;top:761px" width="31" height="19" viewBox="0 0 31 19"><path d="M0.500 3H9L11 0.800H30.500V19H0.500Z" fill="#f3dc8a" stroke="#d8bc5a"/><rect x="3.500" y="4.500" width="5" height="2.500" fill="#4aa84a"/><rect x="9.500" y="4.500" width="5" height="2.500" fill="#d85a3a"/><rect x="15.500" y="4.500" width="10" height="2.500" fill="#5a9ad8"/><rect x="1.500" y="8.500" width="28" height="10.500" fill="#f8eab0"/><rect x="5" y="15.500" width="20" height="1.800" fill="#4ab0c8"/></svg>
<svg style="left:284.5px;top:759px" width="31" height="31" viewBox="0 0 31 31"><circle cx="15.500" cy="15.500" r="15.500" fill="#dd4b3e"/><path d="M15.500 15.500L2.100 7.700A15.500 15.500 0 0 0 9 29.600Z" fill="#1f9d58"/><path d="M15.500 15.500L9 29.600A15.500 15.500 0 0 0 29.800 9.500H15.500Z" fill="#fccd3e"/><circle cx="15.500" cy="15.500" r="7.200" fill="#f4f4f4"/><circle cx="15.500" cy="15.500" r="5.600" fill="#4a8af4"/></svg>
<svg style="left:346px;top:762px" width="32" height="18" viewBox="0 0 32 18"><rect x="0.500" y="0.500" width="31" height="18" fill="#3a8ad0" stroke="#2a6aa8"/><rect x="2" y="2" width="28" height="16" fill="#5aaae4"/><circle cx="8.500" cy="8.500" r="4.500" fill="#e8eef4"/><path d="M8.500 8.500V4A4.500 4.500 0 0 1 13 8.500Z" fill="#f0b030"/><rect x="16.500" y="4" width="11.500" height="4" fill="#e8f0f8"/><rect x="16.500" y="10.500" width="11.500" height="4" fill="#e8f0f8"/><rect x="21" y="5" width="5" height="2" fill="#3a7ac0"/><rect x="21" y="11.500" width="5" height="2" fill="#3a7ac0"/></svg>
<svg style="left:409px;top:757px" width="30" height="23" viewBox="0 0 30 23"><path d="M9.500 1L29.500 3.500V20H9.500Z" fill="#d4dcf0" stroke="#8a98c0"/><path d="M11.500 4L27.500 6V17.500H11.500Z" fill="#1a2ab8"/><path d="M19 5L27.500 6V17.500H23Z" fill="#6a82e0"/><path d="M0.500 12L8 8V23H0.500Z" fill="#b0b6bc" stroke="#7a8086"/><path d="M2 16L7 15M2 19L7 18.500" stroke="#e8ecf0" stroke-width="1.200"/><rect x="6" y="19.500" width="14" height="4" fill="#9aa0a8" stroke="#6a7078"/></svg>
<svg style="left:911.5px;top:771.7px" width="7" height="4.2" viewBox="0 0 7 4.2"><path d="M0 4.500L3.500 0L7 4.500Z" fill="#111"/></svg>
<svg style="left:931.5px;top:766.5px" width="16" height="14" viewBox="0 0 16 14"><rect x="0.800" y="0.800" width="5" height="8" rx="1" fill="#6bc9e9" stroke="#fff" stroke-width="1.600"/><rect x="2.300" y="2.300" width="2" height="2.500" fill="#fff" stroke="#2a3a44" stroke-width="0.600"/><rect x="7.500" y="2.800" width="7.500" height="8" fill="#6bc9e9" stroke="#fff" stroke-width="1.600"/><path d="M3.300 9V14M11 11V14" stroke="#fff" stroke-width="1.800"/><path d="M0 0.800H6.500M7 2.500H15.500" stroke="#2a3a44" stroke-width="0.500" opacity="0.600"/></svg>
<svg style="left:955.5px;top:766.5px" width="16" height="14" viewBox="0 0 16 14"><path d="M0.700 4.500H3L7 0.700V14H0.700Z" fill="#f4f4f4" stroke="#5a6a74" stroke-width="1"/><circle cx="11" cy="9.500" r="4.500" fill="#d83a3a"/><path d="M9 7.500L13 11.500M13 7.500L9 11.500" stroke="#fff" stroke-width="1.300"/></svg>
<div class="t" style="left:993.7px;top:759.2px;color:#10242e;letter-spacing:-0.529px;">5:55 PM</div><div class="t" style="left:991.5px;top:776px;color:#10242e;letter-spacing:-0.152px;">7/9/2016</div>
<div class="a" style="left:578px;top:461px;width:258px;height:264px;background:#f0f0f0;border:1px solid #979797;box-sizing:border-box;"></div>
<div class="a" style="left:608px;top:464px;width:1px;height:258px;background:#d7d7d7;"></div>
<div class="a" style="left:609px;top:464px;width:1px;height:258px;background:#fbfbfb;"></div>
<div class="a" style="left:609px;top:509px;width:224px;height:1px;background:#d0d0d0;"></div><div class="a" style="left:609px;top:510px;width:224px;height:1px;background:#fafafa;"></div><div class="a" style="left:609px;top:579px;width:224px;height:1px;background:#d0d0d0;"></div><div class="a" style="left:609px;top:580px;width:224px;height:1px;background:#fafafa;"></div><div class="a" style="left:609px;top:671px;width:224px;height:1px;background:#d0d0d0;"></div><div class="a" style="left:609px;top:672px;width:224px;height:1px;background:#fafafa;"></div><div class="a" style="left:609px;top:697px;width:224px;height:1px;background:#d0d0d0;"></div><div class="a" style="left:609px;top:698px;width:224px;height:1px;background:#fafafa;"></div>
<div class="a" style="left:581px;top:582px;width:252px;height:22px;background:#d7ebf9;border:1px solid #66aad6;box-sizing:border-box;"></div>
<div class="t" style="left:613.2px;top:467.9px;color:#151515;letter-spacing:-0.165px;">Open</div><div class="t" style="left:613.2px;top:490.3px;color:#151515;letter-spacing:-0.384px;">Explore</div><div class="t" style="left:613.2px;top:515.6px;color:#151515;letter-spacing:-0.029px;">Mark Partition as Active</div><div class="t" style="left:613.2px;top:537.9px;color:#151515;letter-spacing:-0.228px;">Change Drive Letter and Paths...</div><div class="t" style="left:613.2px;top:560.2px;color:#8c8c8c;letter-spacing:-0.168px;">Format...</div><div class="t" style="left:613.2px;top:585.9px;color:#151515;letter-spacing:-0.202px;">Extend Volume...</div><div class="t" style="left:613.2px;top:607.9px;color:#151515;letter-spacing:-0.111px;">Shrink Volume...</div><div class="t" style="left:613.2px;top:629.8px;color:#8c8c8c;letter-spacing:0.095px;">Add Mirror...</div><div class="t" style="left:613.2px;top:651.8px;color:#8c8c8c;letter-spacing:-0.154px;">Delete Volume...</div><div class="t" style="left:613.2px;top:677.8px;color:#151515;letter-spacing:-0.220px;">Properties</div><div class="t" style="left:613.2px;top:703.9px;color:#151515;letter-spacing:-0.122px;">Help</div>
<svg style="left:650px;top:599.5px" width="13" height="21" viewBox="0 0 13 21"><path d="M0.700 0.700V16.500L4.500 13L7.300 19.800L10 18.600L7.200 12H12.200Z" fill="#fff" stroke="#000" stroke-width="1.100" stroke-linejoin="round"/></svg>
<div class="t" style="left:554px;top:228.35px;font-size:22.3px;line-height:26px;height:26px;font-weight:bold;font-style:italic;color:#47b89b;letter-spacing:0.015px;-webkit-text-stroke:0.500px #47b89b;transform:scaleY(1.070);transform-origin:50% 79%;">Now right click on</div><div class="t" style="left:561.5px;top:255.35px;font-size:22.3px;line-height:26px;height:26px;font-weight:bold;font-style:italic;color:#47b89b;letter-spacing:0.046px;-webkit-text-stroke:0.500px #47b89b;transform:scaleY(1.070);transform-origin:50% 79%;">C drive and click</div><div class="t" style="left:553.4px;top:282.35px;font-size:22.3px;line-height:26px;height:26px;font-weight:bold;font-style:italic;color:#47b89b;letter-spacing:0.008px;-webkit-text-stroke:0.500px #47b89b;transform:scaleY(1.070);transform-origin:50% 79%;">on Extend Volume</div>
<svg style="left:530px;top:335px" width="50" height="90" viewBox="0 0 50 90"><path style="filter:drop-shadow(0.800px 1px 1px rgba(40,0,60,0.350))" d="M32.600 10.400A4.700 4.700 0 0 1 41.800 11.600L32.500 59.800L40.900 58.400L18.300 82.700L9.100 49.700L20.300 57.800L21.800 55.500Z" fill="#7a35a8" stroke="#6a2c98" stroke-width="0.800" stroke-linejoin="round"/></svg>
</body>
</html>
